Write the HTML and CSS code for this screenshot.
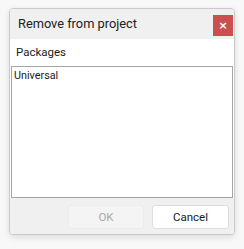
FILE: index.html
```html
<!DOCTYPE html>
<html>
<head>
<meta charset="utf-8">
<link rel="stylesheet" href="styles.css">
</head>
<body>
<div class="dialog">
  <div class="titlebar">
    <span class="title">Remove from project</span>
    <button class="close" aria-label="Close">×</button>
  </div>
  <div class="content">
    <div class="label">Packages</div>
    <div class="listbox">
      <div class="item">Universal</div>
    </div>
  </div>
  <div class="footer">
    <button class="btn btn-disabled" disabled>OK</button>
    <button class="btn">Cancel</button>
  </div>
</div>
</body>
</html>
```
FILE: styles.css
```css
html, body {
  margin: 0;
  padding: 0;
}
body {
  background: #f8f8f8;
  font-family: Roboto, "Liberation Sans", sans-serif;
  color: #1a1a1a;
  width: 244px;
  height: 249px;
  overflow: hidden;
}
.dialog {
  margin: 8px 0 0 9px;
  width: 226px;
  height: 227px;
  box-sizing: border-box;
  border: 1px solid #c9c9c9;
  border-radius: 4px;
  box-shadow: 0 2px 6px rgba(0,0,0,0.12);
  display: flex;
  flex-direction: column;
  overflow: hidden;
  background: #fff;
}
.titlebar {
  height: 30px;
  flex: none;
  background: #f0f0f0;
  display: flex;
  align-items: flex-start;
  padding-left: 8px;
}
.title {
  font-size: 12.8px;
  line-height: 30px;
  flex: 1;
  color: #222;
}
.close {
  margin: 6px 1px 0 0;
  width: 20px;
  height: 21px;
  border: none;
  padding: 0;
  background: #c9504f;
  color: #fff;
  font-family: "DejaVu Sans", sans-serif;
  font-weight: bold;
  font-size: 11px;
  line-height: 21px;
}
.content {
  flex: 1;
  display: flex;
  flex-direction: column;
  padding: 0 1px;
  background: #fff;
}
.label {
  height: 27px;
  line-height: 27px;
  padding-left: 5px;
  font-size: 11.5px;
  color: #1a1a1a;
}
.listbox {
  flex: 1;
  border: 1px solid #a5a5a5;
  padding: 1px 2px;
}
.item {
  font-size: 10.8px;
  line-height: 15px;
  color: #1a1a1a;
}
.footer {
  height: 36px;
  flex: none;
  background: #f0f0f0;
  display: flex;
  justify-content: flex-end;
  align-items: flex-start;
  gap: 8px;
  padding: 7px 5px 0 0;
  box-sizing: border-box;
}
.btn {
  width: 77px;
  height: 24px;
  border: 1px solid #dedede;
  border-radius: 3px;
  background: #fff;
  font-family: Roboto, "Liberation Sans", sans-serif;
  font-size: 11.5px;
  color: #1a1a1a;
  padding: 0;
}
.btn-disabled {
  width: 76px;
  background: #f4f4f4;
  border-color: #ececec;
  color: #a8a8a8;
}
```
